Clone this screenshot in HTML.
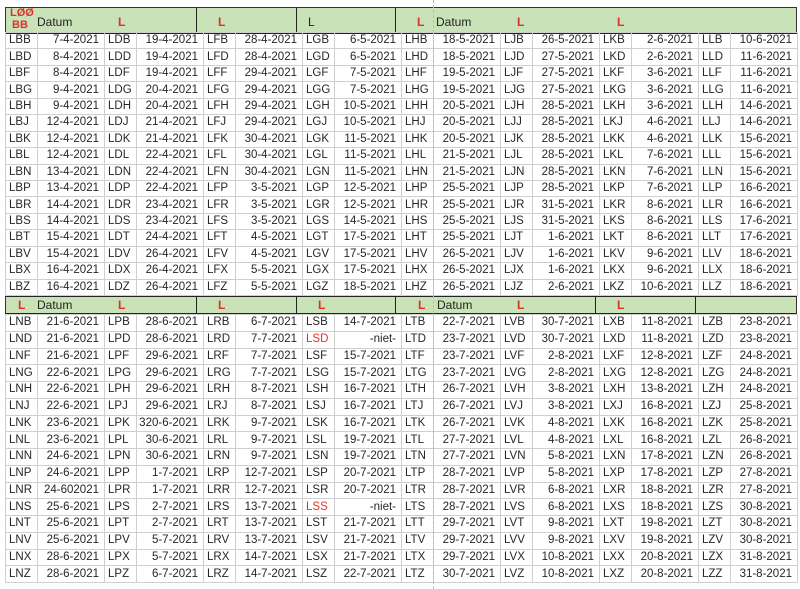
<!DOCTYPE html>
<html><head><meta charset="utf-8">
<style>
body{margin:0;width:800px;height:589px;background:#fff;position:relative;overflow:hidden;font-family:"Liberation Sans",Arial,sans-serif;}
table{position:absolute;left:5px;width:792px;border-collapse:collapse;table-layout:fixed;font-size:11.5px;color:#262626;}
td{border:1px solid #cfcfcf;padding:0 0 0 3px;white-space:nowrap;overflow:hidden;line-height:13px;}
td:nth-child(even){text-align:right;padding:0 5px 0 0;}
tr{height:16px}
#t1{top:32px;height:264px}
#t2{top:314px;height:269px}
.r{color:#e0302a}
.hd{position:absolute;left:5px;width:790px;background:#c9e2b8;border:1px solid #333;}
.hd .v{position:absolute;top:0;bottom:0;width:0;border-left:1.5px solid #222}
.hd span{position:absolute;font-size:12px;color:#222}
.hd span.r{color:#e0302a;font-weight:bold}
#dash{position:absolute;left:433px;top:0;height:589px;border-left:1px dashed #bbb}
</style></head><body>
<div class="hd" style="top:7px;height:24px;border-bottom:2px solid #222">
<div class="v" style="left:190px"></div><div class="v" style="left:290px"></div><div class="v" style="left:389px"></div>
<span class="r" style="left:4px;top:-1px;font-size:11px">LØØ</span>
<span class="r" style="left:6px;top:11px;font-size:11px">BB</span>
<span style="left:31px;top:7px">Datum</span>
<span class="r" style="left:112px;top:7px">L</span>
<span class="r" style="left:212px;top:7px">L</span>
<span style="left:302px;top:7px">L</span>
<span class="r" style="left:411px;top:7px">L</span>
<span style="left:430px;top:7px">Datum</span>
<span class="r" style="left:511px;top:7px">L</span>
<span class="r" style="left:611px;top:7px">L</span>
</div>
<div class="hd" style="top:296px;height:16px;border-top:1.5px solid #222;border-bottom:2px solid #222">
<div class="v" style="left:190px"></div><div class="v" style="left:290px"></div><div class="v" style="left:389px"></div><div class="v" style="left:589px"></div><div class="v" style="left:689px"></div>
<span class="r" style="left:12px;top:1px">L</span>
<span style="left:31px;top:1px">Datum</span>
<span class="r" style="left:112px;top:1px">L</span>
<span class="r" style="left:212px;top:1px">L</span>
<span class="r" style="left:312px;top:1px">L</span>
<span class="r" style="left:412px;top:1px">L</span>
<span style="left:431px;top:1px">Datum</span>
<span class="r" style="left:511px;top:1px">L</span>
<span class="r" style="left:611px;top:1px">L</span>
</div>
<table id="t1">
<colgroup><col style="width:32px"><col style="width:67px"><col style="width:32px"><col style="width:67px"><col style="width:32px"><col style="width:67px"><col style="width:32px"><col style="width:67px"><col style="width:32px"><col style="width:67px"><col style="width:32px"><col style="width:67px"><col style="width:32px"><col style="width:67px"><col style="width:32px"><col style="width:67px"></colgroup>
<tr><td>LBB<td>7-4-2021<td>LDB<td>19-4-2021<td>LFB<td>28-4-2021<td>LGB<td>6-5-2021<td>LHB<td>18-5-2021<td>LJB<td>26-5-2021<td>LKB<td>2-6-2021<td>LLB<td>10-6-2021</tr>
<tr><td>LBD<td>8-4-2021<td>LDD<td>19-4-2021<td>LFD<td>28-4-2021<td>LGD<td>6-5-2021<td>LHD<td>18-5-2021<td>LJD<td>27-5-2021<td>LKD<td>2-6-2021<td>LLD<td>11-6-2021</tr>
<tr><td>LBF<td>8-4-2021<td>LDF<td>19-4-2021<td>LFF<td>29-4-2021<td>LGF<td>7-5-2021<td>LHF<td>19-5-2021<td>LJF<td>27-5-2021<td>LKF<td>3-6-2021<td>LLF<td>11-6-2021</tr>
<tr><td>LBG<td>9-4-2021<td>LDG<td>20-4-2021<td>LFG<td>29-4-2021<td>LGG<td>7-5-2021<td>LHG<td>19-5-2021<td>LJG<td>27-5-2021<td>LKG<td>3-6-2021<td>LLG<td>11-6-2021</tr>
<tr><td>LBH<td>9-4-2021<td>LDH<td>20-4-2021<td>LFH<td>29-4-2021<td>LGH<td>10-5-2021<td>LHH<td>20-5-2021<td>LJH<td>28-5-2021<td>LKH<td>3-6-2021<td>LLH<td>14-6-2021</tr>
<tr><td>LBJ<td>12-4-2021<td>LDJ<td>21-4-2021<td>LFJ<td>29-4-2021<td>LGJ<td>10-5-2021<td>LHJ<td>20-5-2021<td>LJJ<td>28-5-2021<td>LKJ<td>4-6-2021<td>LLJ<td>14-6-2021</tr>
<tr><td>LBK<td>12-4-2021<td>LDK<td>21-4-2021<td>LFK<td>30-4-2021<td>LGK<td>11-5-2021<td>LHK<td>20-5-2021<td>LJK<td>28-5-2021<td>LKK<td>4-6-2021<td>LLK<td>15-6-2021</tr>
<tr><td>LBL<td>12-4-2021<td>LDL<td>22-4-2021<td>LFL<td>30-4-2021<td>LGL<td>11-5-2021<td>LHL<td>21-5-2021<td>LJL<td>28-5-2021<td>LKL<td>7-6-2021<td>LLL<td>15-6-2021</tr>
<tr><td>LBN<td>13-4-2021<td>LDN<td>22-4-2021<td>LFN<td>30-4-2021<td>LGN<td>11-5-2021<td>LHN<td>21-5-2021<td>LJN<td>28-5-2021<td>LKN<td>7-6-2021<td>LLN<td>15-6-2021</tr>
<tr><td>LBP<td>13-4-2021<td>LDP<td>22-4-2021<td>LFP<td>3-5-2021<td>LGP<td>12-5-2021<td>LHP<td>25-5-2021<td>LJP<td>28-5-2021<td>LKP<td>7-6-2021<td>LLP<td>16-6-2021</tr>
<tr><td>LBR<td>14-4-2021<td>LDR<td>23-4-2021<td>LFR<td>3-5-2021<td>LGR<td>12-5-2021<td>LHR<td>25-5-2021<td>LJR<td>31-5-2021<td>LKR<td>8-6-2021<td>LLR<td>16-6-2021</tr>
<tr><td>LBS<td>14-4-2021<td>LDS<td>23-4-2021<td>LFS<td>3-5-2021<td>LGS<td>14-5-2021<td>LHS<td>25-5-2021<td>LJS<td>31-5-2021<td>LKS<td>8-6-2021<td>LLS<td>17-6-2021</tr>
<tr><td>LBT<td>15-4-2021<td>LDT<td>24-4-2021<td>LFT<td>4-5-2021<td>LGT<td>17-5-2021<td>LHT<td>25-5-2021<td>LJT<td>1-6-2021<td>LKT<td>8-6-2021<td>LLT<td>17-6-2021</tr>
<tr><td>LBV<td>15-4-2021<td>LDV<td>26-4-2021<td>LFV<td>4-5-2021<td>LGV<td>17-5-2021<td>LHV<td>26-5-2021<td>LJV<td>1-6-2021<td>LKV<td>9-6-2021<td>LLV<td>18-6-2021</tr>
<tr><td>LBX<td>16-4-2021<td>LDX<td>26-4-2021<td>LFX<td>5-5-2021<td>LGX<td>17-5-2021<td>LHX<td>26-5-2021<td>LJX<td>1-6-2021<td>LKX<td>9-6-2021<td>LLX<td>18-6-2021</tr>
<tr><td>LBZ<td>16-4-2021<td>LDZ<td>26-4-2021<td>LFZ<td>5-5-2021<td>LGZ<td>18-5-2021<td>LHZ<td>26-5-2021<td>LJZ<td>2-6-2021<td>LKZ<td>10-6-2021<td>LLZ<td>18-6-2021</tr>
</table>
<table id="t2">
<colgroup><col style="width:32px"><col style="width:67px"><col style="width:32px"><col style="width:67px"><col style="width:32px"><col style="width:67px"><col style="width:32px"><col style="width:67px"><col style="width:32px"><col style="width:67px"><col style="width:32px"><col style="width:67px"><col style="width:32px"><col style="width:67px"><col style="width:32px"><col style="width:67px"></colgroup>
<tr><td>LNB<td>21-6-2021<td>LPB<td>28-6-2021<td>LRB<td>6-7-2021<td>LSB<td>14-7-2021<td>LTB<td>22-7-2021<td>LVB<td>30-7-2021<td>LXB<td>11-8-2021<td>LZB<td>23-8-2021</tr>
<tr><td>LND<td>21-6-2021<td>LPD<td>28-6-2021<td>LRD<td>7-7-2021<td class="r">LSD<td>-niet-<td>LTD<td>23-7-2021<td>LVD<td>30-7-2021<td>LXD<td>11-8-2021<td>LZD<td>23-8-2021</tr>
<tr><td>LNF<td>21-6-2021<td>LPF<td>29-6-2021<td>LRF<td>7-7-2021<td>LSF<td>15-7-2021<td>LTF<td>23-7-2021<td>LVF<td>2-8-2021<td>LXF<td>12-8-2021<td>LZF<td>24-8-2021</tr>
<tr><td>LNG<td>22-6-2021<td>LPG<td>29-6-2021<td>LRG<td>7-7-2021<td>LSG<td>15-7-2021<td>LTG<td>23-7-2021<td>LVG<td>2-8-2021<td>LXG<td>12-8-2021<td>LZG<td>24-8-2021</tr>
<tr><td>LNH<td>22-6-2021<td>LPH<td>29-6-2021<td>LRH<td>8-7-2021<td>LSH<td>16-7-2021<td>LTH<td>26-7-2021<td>LVH<td>3-8-2021<td>LXH<td>13-8-2021<td>LZH<td>24-8-2021</tr>
<tr><td>LNJ<td>22-6-2021<td>LPJ<td>29-6-2021<td>LRJ<td>8-7-2021<td>LSJ<td>16-7-2021<td>LTJ<td>26-7-2021<td>LVJ<td>3-8-2021<td>LXJ<td>16-8-2021<td>LZJ<td>25-8-2021</tr>
<tr><td>LNK<td>23-6-2021<td>LPK<td>320-6-2021<td>LRK<td>9-7-2021<td>LSK<td>16-7-2021<td>LTK<td>26-7-2021<td>LVK<td>4-8-2021<td>LXK<td>16-8-2021<td>LZK<td>25-8-2021</tr>
<tr><td>LNL<td>23-6-2021<td>LPL<td>30-6-2021<td>LRL<td>9-7-2021<td>LSL<td>19-7-2021<td>LTL<td>27-7-2021<td>LVL<td>4-8-2021<td>LXL<td>16-8-2021<td>LZL<td>26-8-2021</tr>
<tr><td>LNN<td>24-6-2021<td>LPN<td>30-6-2021<td>LRN<td>9-7-2021<td>LSN<td>19-7-2021<td>LTN<td>27-7-2021<td>LVN<td>5-8-2021<td>LXN<td>17-8-2021<td>LZN<td>26-8-2021</tr>
<tr><td>LNP<td>24-6-2021<td>LPP<td>1-7-2021<td>LRP<td>12-7-2021<td>LSP<td>20-7-2021<td>LTP<td>28-7-2021<td>LVP<td>5-8-2021<td>LXP<td>17-8-2021<td>LZP<td>27-8-2021</tr>
<tr><td>LNR<td>24-602021<td>LPR<td>1-7-2021<td>LRR<td>12-7-2021<td>LSR<td>20-7-2021<td>LTR<td>28-7-2021<td>LVR<td>6-8-2021<td>LXR<td>18-8-2021<td>LZR<td>27-8-2021</tr>
<tr><td>LNS<td>25-6-2021<td>LPS<td>2-7-2021<td>LRS<td>13-7-2021<td class="r">LSS<td>-niet-<td>LTS<td>28-7-2021<td>LVS<td>6-8-2021<td>LXS<td>18-8-2021<td>LZS<td>30-8-2021</tr>
<tr><td>LNT<td>25-6-2021<td>LPT<td>2-7-2021<td>LRT<td>13-7-2021<td>LST<td>21-7-2021<td>LTT<td>29-7-2021<td>LVT<td>9-8-2021<td>LXT<td>19-8-2021<td>LZT<td>30-8-2021</tr>
<tr><td>LNV<td>25-6-2021<td>LPV<td>5-7-2021<td>LRV<td>13-7-2021<td>LSV<td>21-7-2021<td>LTV<td>29-7-2021<td>LVV<td>9-8-2021<td>LXV<td>19-8-2021<td>LZV<td>30-8-2021</tr>
<tr><td>LNX<td>28-6-2021<td>LPX<td>5-7-2021<td>LRX<td>14-7-2021<td>LSX<td>21-7-2021<td>LTX<td>29-7-2021<td>LVX<td>10-8-2021<td>LXX<td>20-8-2021<td>LZX<td>31-8-2021</tr>
<tr><td>LNZ<td>28-6-2021<td>LPZ<td>6-7-2021<td>LRZ<td>14-7-2021<td>LSZ<td>22-7-2021<td>LTZ<td>30-7-2021<td>LVZ<td>10-8-2021<td>LXZ<td>20-8-2021<td>LZZ<td>31-8-2021</tr>
</table>
<div id="dash"></div>
</body></html>
